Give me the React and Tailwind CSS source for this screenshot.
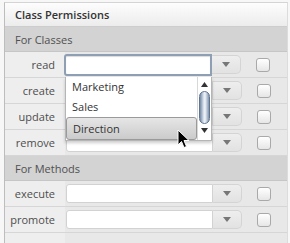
import React from 'react';

const Caret = () => (
  <svg width="8" height="5" viewBox="0 0 8 5">
    <path d="M0 0 L8 0 L4 5 Z" fill="#777" />
  </svg>
);

const Row = ({ label, focused }) => (
  <div className="flex h-[26px] border-b border-[#d6d6d6]">
    <div className="w-[60px] shrink-0 bg-[#eeeeee] pr-[10px] text-right leading-[25px] text-[#4d4d4d]">
      {label}
    </div>
    <div className="flex flex-1 items-center bg-[#e8e8e8]">
      {focused ? (
        <div className="-ml-px h-[22px] w-[148px] rounded-l-[3px] border-2 border-[#8f9fb3] bg-white shadow-[inset_0_1px_1px_rgba(0,0,0,0.15)]" />
      ) : (
        <div className="ml-px h-[19px] w-[147px] rounded-l-[3px] border border-[#d2d2d2] bg-white" />
      )}
      <div className="flex h-[19px] w-[29px] items-center justify-center rounded-r-[5px] border border-l-0 border-[#d4d4d4] bg-gradient-to-b from-[#eeeeee] to-[#e2e2e2]">
        <Caret />
      </div>
      <div className="ml-[15px] h-[14px] w-[14px] rounded-[3px] border border-[#a9a9a9] bg-gradient-to-b from-white to-[#e6e6e6]" />
    </div>
  </div>
);

const SectionHeader = ({ children }) => (
  <div className="h-[25px] border-b border-[#c6c6c6] bg-[#d3d3d3] pl-[10px] leading-[25px] text-[#505050]">
    {children}
  </div>
);

export default function App() {
  return (
    <div
      className="relative h-[243px] w-[290px] overflow-hidden bg-[#f7f7f7] pl-[4px] pt-[2px] text-[11px]"
      style={{ fontFamily: '"Open Sans", sans-serif' }}
    >
      <div className="flex h-[241px] w-[284px] flex-col border-l border-t border-r border-l-[#bdbdbd] border-t-[#d4d4d4] border-r-[#dcdcdc] bg-[#e8e8e8]">
        <div className="h-[24px] shrink-0 border-b border-[#cdcdcd] bg-gradient-to-b from-[#fdfdfd] to-[#ececec] pl-[10px] font-semibold leading-[24px] text-[#333]">
          Class Permissions
        </div>
        <SectionHeader>For Classes</SectionHeader>
        <Row label="read" focused />
        <Row label="create" />
        <Row label="update" />
        <Row label="remove" />
        <SectionHeader>For Methods</SectionHeader>
        <Row label="execute" />
        <Row label="promote" />
        <div className="flex flex-1">
          <div className="w-[60px] bg-[#eeeeee]" />
        </div>
      </div>

      {/* open dropdown list */}
      <div className="absolute left-[65px] top-[77px] flex h-[64px] w-[147px] border border-t-0 border-[#b5b5b5] bg-white shadow-[0_2px_3px_rgba(0,0,0,0.2)]">
        <div className="flex flex-1 flex-col text-[#333]">
          <div className="h-[20px] pl-[6px] leading-[20px]">Marketing</div>
          <div className="h-[20px] pl-[6px] leading-[20px]">Sales</div>
          <div className="h-[23px] rounded-[3px] border border-[#9a9a9a] bg-gradient-to-b from-[#e6e6e6] to-[#cbcbcb] pl-[6px] leading-[21px]">
            Direction
          </div>
        </div>
        <div className="flex w-[14px] flex-col items-center border-l border-[#d8d8d8] bg-white">
          <svg className="mt-[5px]" width="7" height="5" viewBox="0 0 7 5">
            <path d="M3.5 0 L7 5 L0 5 Z" fill="#333" />
          </svg>
          <div className="mt-[4px] h-[33px] w-[11px] rounded-full border border-[#5f7490] bg-[linear-gradient(to_right,#7489a4,#d9e2ec_40%,#f2f6fa_55%,#7e93ad)]" />
          <svg className="mt-[4px]" width="7" height="5" viewBox="0 0 7 5">
            <path d="M0 0 L7 0 L3.5 5 Z" fill="#333" />
          </svg>
        </div>
      </div>

      {/* mouse cursor */}
      <svg className="absolute left-[177px] top-[129px]" width="13" height="20" viewBox="0 0 13 20">
        <path d="M1 1 L1 16 L4.5 12.5 L7 18.5 L9.5 17.5 L7 11.5 L12 11.5 Z" fill="#000" stroke="#fff" strokeWidth="1" />
      </svg>
    </div>
  );
}
